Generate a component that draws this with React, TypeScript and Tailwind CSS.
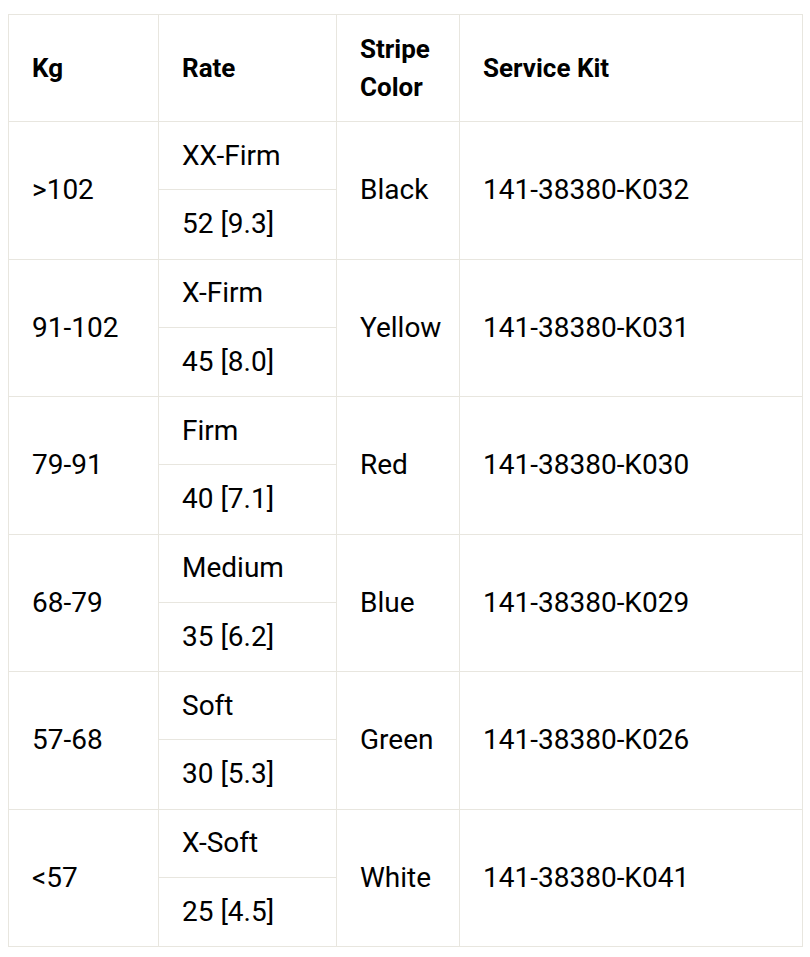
const rows = [
  { kg: ">102", rate: "XX-Firm", value: "52 [9.3]", color: "Black", kit: "141-38380-K032" },
  { kg: "91-102", rate: "X-Firm", value: "45 [8.0]", color: "Yellow", kit: "141-38380-K031" },
  { kg: "79-91", rate: "Firm", value: "40 [7.1]", color: "Red", kit: "141-38380-K030" },
  { kg: "68-79", rate: "Medium", value: "35 [6.2]", color: "Blue", kit: "141-38380-K029" },
  { kg: "57-68", rate: "Soft", value: "30 [5.3]", color: "Green", kit: "141-38380-K026" },
  { kg: "<57", rate: "X-Soft", value: "25 [4.5]", color: "White", kit: "141-38380-K041" },
];

const cell = "border border-[#e8e6df] px-[23px] py-[14px] text-left align-middle";

export default function App() {
  return (
    <div className="min-h-screen bg-white pl-2 pt-[14px] font-['Roboto',sans-serif] leading-[38px] text-black">
      <table className="w-[794px] table-fixed border-collapse">
        <colgroup>
          <col className="w-[150px]" />
          <col className="w-[178px]" />
          <col className="w-[123px]" />
          <col className="w-[343px]" />
        </colgroup>
        <thead>
          <tr className="h-[107px] text-[26px]">
            <th className={`${cell} font-bold`}>Kg</th>
            <th className={`${cell} font-bold`}>Rate</th>
            <th className={`${cell} font-bold`}>
              Stripe
              <br />
              Color
            </th>
            <th className={`${cell} font-bold`}>Service Kit</th>
          </tr>
        </thead>
        <tbody className="text-[28px]">
          {rows.map((r) => (
            <>
              <tr key={r.kg + "a"} className="h-[68px]">
                <td rowSpan={2} className={cell}>{r.kg}</td>
                <td className={cell}>{r.rate}</td>
                <td rowSpan={2} className={cell}>{r.color}</td>
                <td rowSpan={2} className={cell}>{r.kit}</td>
              </tr>
              <tr key={r.kg + "b"} className="h-[69.5px]">
                <td className={cell}>{r.value}</td>
              </tr>
            </>
          ))}
        </tbody>
      </table>
    </div>
  );
}
